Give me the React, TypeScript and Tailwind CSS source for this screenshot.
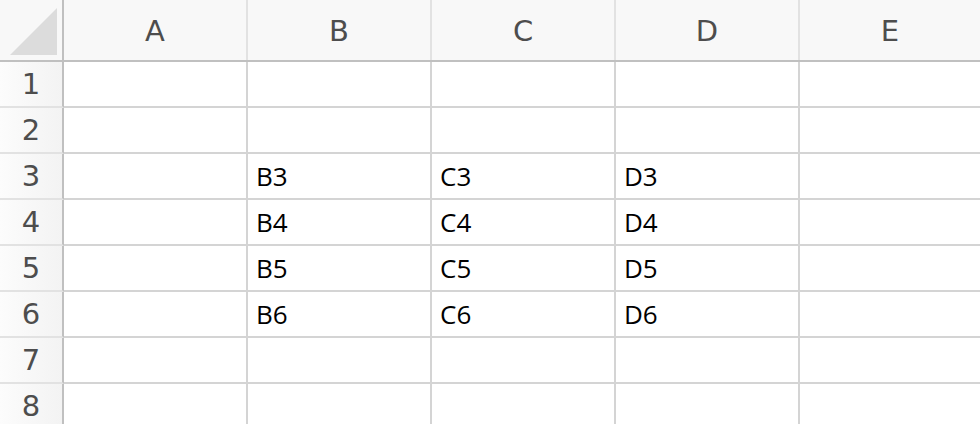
const COLS = ['A', 'B', 'C', 'D', 'E'];
const ROWS = [1, 2, 3, 4, 5, 6, 7, 8];

const data: Record<string, string> = {};
for (const r of [3, 4, 5, 6]) {
  for (const c of ['B', 'C', 'D']) data[`${c}${r}`] = `${c}${r}`;
}

export default function App() {
  return (
    <div className="w-[980px] h-[424px] overflow-hidden bg-white">
      {/* column headers */}
      <div className="flex h-[62px] border-b-2 border-[#c0c0c0] bg-[#f8f8f8]">
        <div className="w-[64px] shrink-0 border-r-2 border-[#c0c0c0] relative">
          <svg className="absolute left-0 top-0" width="62" height="60" viewBox="0 0 62 60">
            <polygon points="10,55 57,55 57,8" fill="#dcdcdc" />
          </svg>
        </div>
        {COLS.map((c, i) => (
          <div
            key={c}
            className={`${i === COLS.length - 1 ? 'flex-1' : 'w-[184px] border-r-2 border-[#e2e2e2]'} shrink-0 flex items-center justify-center pt-[3px] text-[29px] text-[#4d4d4d] font-['DejaVu_Sans',sans-serif]`}
          >
            {c}
          </div>
        ))}
      </div>

      {ROWS.map(r => (
        <div key={r} className="flex h-[46px]">
          <div className="w-[64px] shrink-0 border-r-2 border-b-2 border-r-[#c0c0c0] border-b-[#e2e2e2] bg-gradient-to-r from-[#fcfcfc] to-[#f3f3f3] flex items-center justify-center pt-[2px] text-[29px] text-[#4d4d4d] font-['DejaVu_Sans',sans-serif]">
            {r}
          </div>
          {COLS.map((c, i) => (
            <div
              key={c}
              className={`${i === COLS.length - 1 ? 'flex-1 border-b-2' : 'w-[184px] border-r-2 border-b-2'} shrink-0 border-[#d4d4d4] flex items-center pl-2 text-[26px] font-medium text-black font-['Open_Sans',sans-serif]`}
            >
              {data[`${c}${r}`] ?? ''}
            </div>
          ))}
        </div>
      ))}
    </div>
  );
}
